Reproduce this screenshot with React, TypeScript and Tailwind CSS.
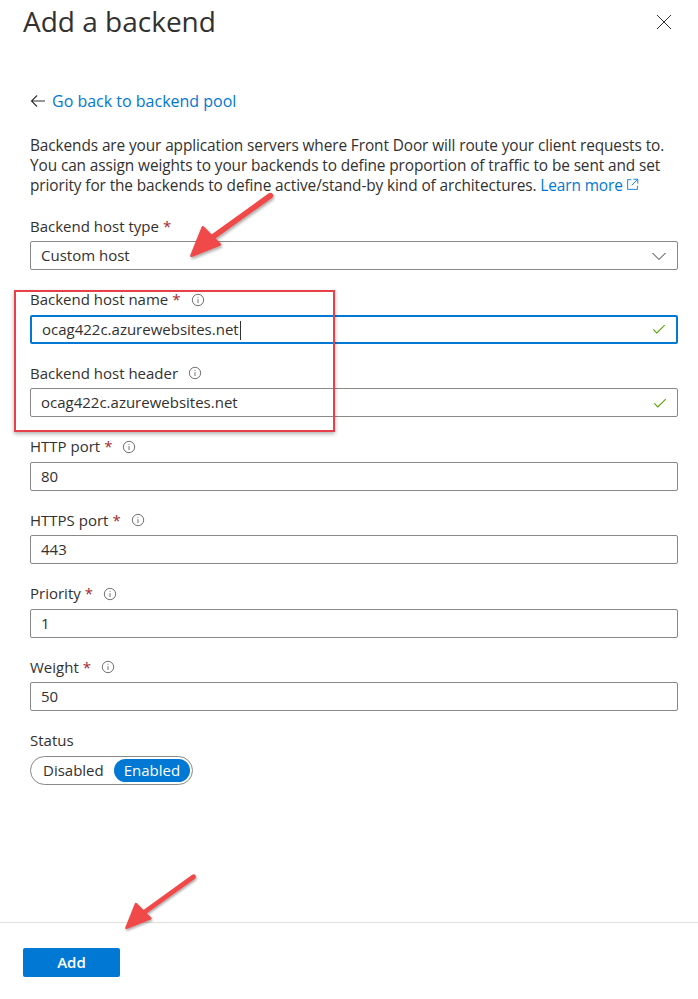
import React from 'react';

const font = { fontFamily: '"Segoe UI", "Open Sans", "Noto Sans", sans-serif' };

function Info() {
    return (
        <svg className="w-[14px] h-[14px] ml-[10px] text-[#605e5c]" viewBox="0 0 16 16" fill="none" stroke="currentColor" strokeWidth={1}>
            <circle cx="8" cy="8" r="6.5" />
            <path d="M8 7v4.5" />
            <circle cx="8" cy="4.8" r="0.6" fill="currentColor" stroke="none" />
        </svg>
    );
}

function Check() {
    return (
        <svg className="w-[14px] h-[14px] text-[#57a300]" viewBox="0 0 16 16" fill="none" stroke="currentColor" strokeWidth={1.2}>
            <path d="M1.5 8.5l4 4L14.5 3.5" />
        </svg>
    );
}

function Label({ text, required, info }: { text: string; required?: boolean; info?: boolean }) {
    return (
        <div className="flex items-center h-[20px] text-[15px] text-[#323130]">
            <span>{text}</span>
            {required && <span className="text-[#a4262c] ml-[4px]">*</span>}
            {info && <Info />}
        </div>
    );
}

function Field({ label, value, required, info, focused, valid }: {
    label: string; value: string; required?: boolean; info?: boolean; focused?: boolean; valid?: boolean;
}) {
    return (
        <div className="mb-[19.5px]">
            <Label text={label} required={required} info={info} />
            <div
                className={`mt-[5px] h-[29px] flex items-center justify-between rounded-[2px] pl-[10px] pr-[10px] text-[15px] text-[#323130] ${focused ? 'border-2 border-[#0078d4] pl-[9px]' : 'border border-[#8a8886]'}`}
            >
                <span>
                    {value}
                    {focused && <span className="inline-block w-px h-[19px] bg-[#323130] align-middle ml-px" />}
                </span>
                {valid && <Check />}
            </div>
        </div>
    );
}

function Arrow({ className }: { className: string }) {
    return (
        <svg className={`absolute pointer-events-none ${className}`} viewBox="0 0 100 80" fill="none">
            <defs>
                <filter id="sh" x="-20%" y="-20%" width="140%" height="140%">
                    <feDropShadow dx="1" dy="2" stdDeviation="1.5" floodColor="#000" floodOpacity="0.35" />
                </filter>
            </defs>
            <g filter="url(#sh)">
                <path d="M92 6 L28 52" stroke="#f04848" strokeWidth={6} strokeLinecap="round" />
                <path d="M8 70 L20 40 L38 58 Z" fill="#f04848" stroke="#f04848" strokeWidth={3} strokeLinejoin="round" />
            </g>
        </svg>
    );
}

export default function App() {
    return (
        <div className="relative w-[698px] h-[999px] bg-white overflow-hidden" style={font}>
            {/* Header */}
            <div className="flex items-start justify-between pl-[23px] pr-[26px] pt-[2px]">
                <h1 className="text-[28px] leading-[38px] text-[#323130] font-normal">Add a backend</h1>
                <svg className="w-[16px] h-[16px] mt-[12px] text-[#323130]" viewBox="0 0 16 16" stroke="currentColor" strokeWidth={1}>
                    <path d="M1 1l14 14M15 1L1 15" />
                </svg>
            </div>

            <div className="pl-[30px] pr-[20px] pt-[50px]">
                <a className="flex items-center text-[16px] text-[#0078d4] h-[22px]">
                    <svg className="w-[16px] h-[16px] mr-[6px] text-[#323130]" viewBox="0 0 16 16" fill="none" stroke="currentColor" strokeWidth={1.1}>
                        <path d="M15 8H1.5M7 2.5L1.5 8 7 13.5" />
                    </svg>
                    Go back to backend pool
                </a>

                <p className="mt-[24px] text-[15.4px] leading-[20px] text-[#323130] whitespace-nowrap tracking-[-0.1px]">
                    Backends are your application servers where Front Door will route your client requests to.
                    <br />
                    You can assign weights to your backends to define proportion of traffic to be sent and set
                    <br />
                    priority for the backends to define active/stand-by kind of architectures.{' '}
                    <span className="text-[#0078d4]">
                        Learn more
                        <svg className="inline-block w-[13px] h-[13px] ml-[3px] -mt-[4px]" viewBox="0 0 16 16" fill="none" stroke="currentColor" strokeWidth={1.1}>
                            <path d="M6.5 2H2v12h12V9.5M9 1.5h5.5V7M14.5 1.5L7 9" />
                        </svg>
                    </span>
                </p>

                <div className="mt-[20px] mb-[19.5px]">
                    <Label text="Backend host type" required />
                    <div className="mt-[5px] h-[29px] flex items-center justify-between border border-[#8a8886] rounded-[2px] pl-[10px] pr-[10px] text-[15px] text-[#323130]">
                        <span>Custom host</span>
                        <svg className="w-[16px] h-[16px] text-[#323130]" viewBox="0 0 16 16" fill="none" stroke="currentColor" strokeWidth={1}>
                            <path d="M1.5 5l6.5 6.5L14.5 5" />
                        </svg>
                    </div>
                </div>

                <Field label="Backend host name" value="ocag422c.azurewebsites.net" required info focused valid />
                <Field label="Backend host header" value="ocag422c.azurewebsites.net" info valid />
                <Field label="HTTP port" value="80" required info />
                <Field label="HTTPS port" value="443" required info />
                <Field label="Priority" value="1" required info />
                <Field label="Weight" value="50" required info />

                <Label text="Status" />
                <div className="mt-[5px] inline-flex items-center h-[29px] border border-[#8a8886] rounded-full p-[2px] text-[15px]">
                    <span className="pl-[10px] pr-[10px] text-[#323130]">Disabled</span>
                    <span className="px-[10px] h-full flex items-center rounded-full bg-[#0078d4] text-white">Enabled</span>
                </div>
            </div>

            {/* Footer */}
            <div className="absolute left-0 right-0 top-[922px] border-t border-[#e1dfdd] pt-[25px] pl-[23px]">
                <button className="w-[97px] h-[29px] rounded-[2px] bg-[#0078d4] text-white text-[15px] font-semibold">Add</button>
            </div>

            {/* Annotations */}
            <div className="absolute left-[14px] top-[290px] w-[321px] h-[142px] border-2 border-[#e8404a] shadow-[0_2px_4px_rgba(0,0,0,0.3)] pointer-events-none" />
            <Arrow className="left-[184px] top-[190px] w-[94px] h-[75px]" />
            <Arrow className="left-[116px] top-[872px] w-[88px] h-[64px]" />
        </div>
    );
}
